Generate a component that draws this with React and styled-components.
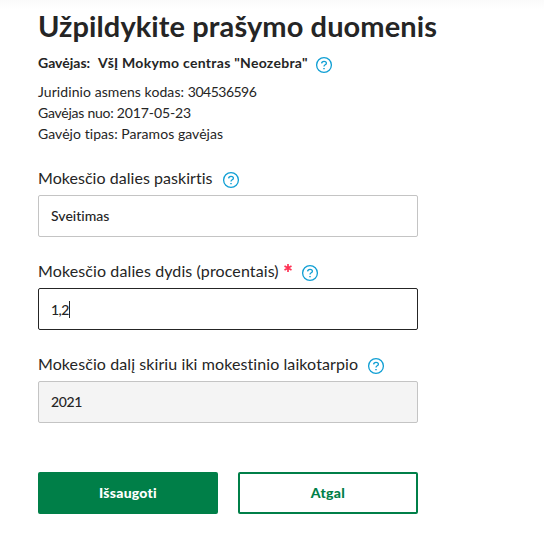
import React from 'react';
import styled, { createGlobalStyle } from 'styled-components';

const GlobalStyle = createGlobalStyle`
  * { box-sizing: border-box; }
  body {
    margin: 0;
    background: #fff;
    color: #252525;
    font-family: Lato, "Noto Sans", sans-serif;
  }
`;

const Page = styled.main`
  display: flex;
  flex-direction: column;
  align-items: flex-start;
  height: 538px;
  padding: 7px 38px 0;
  overflow: hidden;
  background: linear-gradient(#fafafa, #fff 9px);
`;

const Title = styled.h1`
  margin: 0;
  font-size: 29px;
  line-height: 38px;
  font-weight: 700;
  letter-spacing: ${(p) => p.$track || 0}px;
  white-space: nowrap;
`;

const Recipient = styled.div`
  display: flex;
  align-items: center;
  height: 20px;
  margin-top: 10px;
  font-size: 14px;
  line-height: 20px;
  font-weight: 700;
  white-space: nowrap;
`;

const RecipientLabel = styled.span`
  width: 60px;
  margin-top: -4px;
`;

const RecipientName = styled.span`
  width: 210px;
  margin-top: -4px;
  letter-spacing: 0.28px;
`;

const Details = styled.div`
  margin-top: 6px;
  font-size: 14px;
  line-height: 21px;
  font-weight: 400;
`;

const Detail = styled.div`
  letter-spacing: ${(p) => p.$track || 0}px;
  white-space: nowrap;
`;

const Digits = styled.span`
  letter-spacing: ${(p) => p.$track || 0}px;
`;

const Form = styled.form`
  display: flex;
  flex-direction: column;
  gap: 23px;
  width: 380px;
  margin-top: 23px;
`;

const Field = styled.div`
  display: flex;
  flex-direction: column;
`;

const LabelRow = styled.div`
  display: flex;
  align-items: center;
  height: 28px;
  padding-bottom: 2px;
  font-size: 16px;
  line-height: 24px;
  font-weight: 400;
  white-space: nowrap;
`;

const Label = styled.label`
  width: ${(p) => p.$width}px;
  margin-top: -4px;
  letter-spacing: ${(p) => p.$track || 0}px;
`;

const Required = styled.svg`
  width: 8px;
  height: 8px;
  margin: -10px 0 0 5px;
  stroke: #ff3355;
  stroke-width: 1.7;
`;

const Control = styled.div`
  display: flex;
  align-items: center;
  height: 42px;
  padding: ${(p) => (p.$focused ? '2px' : 0)} 12px 0;
  border: 1px solid ${(p) => (p.$focused ? '#252525' : '#c4c4c4')};
  border-radius: 2px;
  background: ${(p) => (p.$disabled ? '#f4f4f4' : '#fff')};
  font-size: 14px;
  line-height: 20px;
  font-weight: 500;
  letter-spacing: ${(p) => p.$track || 0}px;
`;

const Caret = styled.span`
  width: 1px;
  height: 17px;
  margin-top: -2px;
  background: #252525;
`;

const Actions = styled.div`
  display: grid;
  grid-template-columns: 1fr 1fr;
  gap: 20px;
  margin-top: 26px;
`;

const Button = styled.button`
  height: 42px;
  padding: 0;
  border: 2px solid #007f48;
  border-radius: 2px;
  background: ${(p) => (p.$primary ? '#007f48' : '#fff')};
  color: ${(p) => (p.$primary ? '#fff' : '#007f48')};
  font: 900 14px/20px Lato, "Noto Sans", sans-serif;
  letter-spacing: ${(p) => p.$track || 0}px;
`;

const HelpIcon = styled.svg`
  flex: none;
  width: 16px;
  height: 16px;
  margin-left: ${(p) => p.$gap}px;
  fill: none;
  stroke: #109fd4;
  overflow: visible;
`;

function Help({ gap }) {
  return (
    <HelpIcon $gap={gap} viewBox="0 0 16 16" aria-label="Pagalba">
      <circle cx="8" cy="8" r="7.4" strokeWidth="1.3" />
      <path d="M5.6 6.4C5.7 5.1 6.6 4.3 8 4.3c1.4 0 2.4.8 2.4 1.9C10.4 7.9 8 7.7 8 9.5" strokeWidth="1.3" />
      <path d="M8 11v1.2" strokeWidth="1.5" />
    </HelpIcon>
  );
}

function Asterisk() {
  return (
    <Required viewBox="0 0 8 8" aria-label="privaloma">
      <path d="M4 0v8M.5 2l7 4M7.5 2l-7 4" />
    </Required>
  );
}

export default function App() {
  return (
    <>
      <GlobalStyle />
      <Page>
        <Title $track={0.09}>Užpildykite prašymo duomenis</Title>
        <Recipient>
          <RecipientLabel>Gavėjas:</RecipientLabel>
          <RecipientName>VšĮ Mokymo centras "Neozebra"</RecipientName>
          <Help gap={8} />
        </Recipient>
        <Details>
          <Detail $track={0.08}>Juridinio asmens kodas: <Digits $track={-0.5}>304536596</Digits></Detail>
          <Detail $track={-0.25}>Gavėjas nuo: <Digits $track={-0.1}>2017-05-23</Digits></Detail>
          <Detail $track={0.05}>Gavėjo tipas: Paramos gavėjas</Detail>
        </Details>
        <Form>
          <Field>
            <LabelRow>
              <Label $width={175} $track={0.04}>Mokesčio dalies paskirtis</Label>
              <Help gap={10} />
            </LabelRow>
            <Control $track={0.02}>Sveitimas</Control>
          </Field>
          <Field>
            <LabelRow>
              <Label $width={241} $track={0.11}>Mokesčio dalies dydis (procentais)</Label>
              <Asterisk />
              <Help gap={10} />
            </LabelRow>
            <Control $focused $track={-0.6}>1,2<Caret /></Control>
          </Field>
          <Field>
            <LabelRow>
              <Label $width={320} $track={0.09}>Mokesčio dalį skiriu iki mokestinio laikotarpio</Label>
              <Help gap={10} />
            </LabelRow>
            <Control $disabled $track={-0.4}>2021</Control>
          </Field>
          <Actions>
            <Button type="button" $primary $track={0.25}>Išsaugoti</Button>
            <Button type="button" $track={0.3}>Atgal</Button>
          </Actions>
        </Form>
      </Page>
    </>
  );
}
